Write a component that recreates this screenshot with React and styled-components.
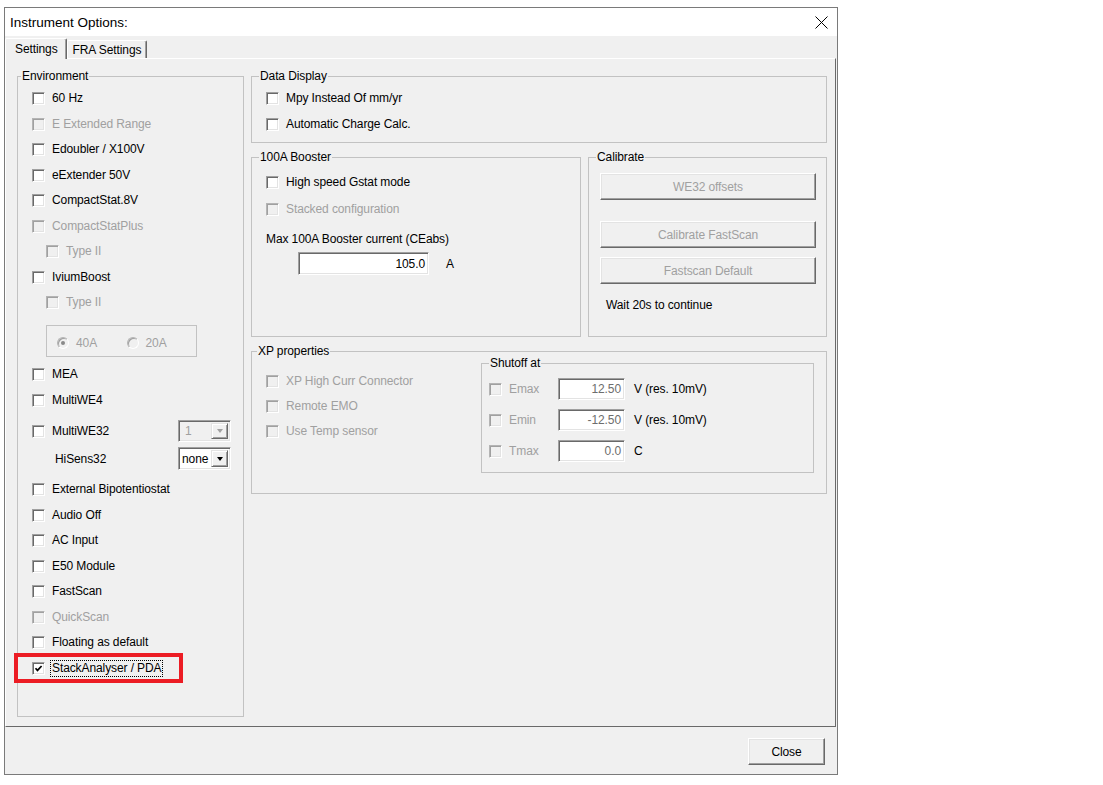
import styled, { createGlobalStyle } from "styled-components";

const FACE = "#f0f0f0";
const GRAY_TEXT = "#a0a0a0";

const GlobalStyle = createGlobalStyle`
  html, body {
    margin: 0;
    background: #ffffff;
  }
  body {
    font-family: "Liberation Sans", Arial, sans-serif;
    font-size: 12px;
    letter-spacing: -0.1px;
    color: #000;
  }
`;

const Page = styled.div`
  padding: 7px 0 0 4px;
`;

const Window = styled.div`
  width: 834px;
  height: 768px;
  box-sizing: border-box;
  border: 1px solid #7a7a7a;
  background: ${FACE};
  display: flex;
  flex-direction: column;
`;

const TitleBar = styled.div`
  flex: none;
  height: 28px;
  background: #ffffff;
  display: flex;
  align-items: center;
  justify-content: space-between;
  padding: 0 9px 0 5px;
`;

const TitleText = styled.span`
  font-size: 13.5px;
  letter-spacing: 0;
`;

const TabStrip = styled.div`
  flex: none;
  height: 22px;
  display: flex;
  align-items: flex-end;
  position: relative;
  z-index: 1;
`;

const Tab = styled.div`
  box-sizing: border-box;
  height: ${(p) => (p.$active ? 21 : 18)}px;
  margin-bottom: ${(p) => (p.$active ? -1 : 0)}px;
  padding: ${(p) => (p.$active ? "0 8px 0 9px" : "0 5px")};
  display: flex;
  align-items: center;
  background: ${FACE};
  border-top: 1px solid #ffffff;
  border-left: 1px solid #ffffff;
  border-right: 1px solid #696969;
  box-shadow: inset -1px 0 0 #a0a0a0;
  border-radius: 2px 2px 0 0;
`;

const Panel = styled.div`
  flex: none;
  height: 669px;
  box-sizing: border-box;
  margin-right: 1px;
  border: 1px solid;
  border-color: #ffffff #696969 #696969 #ffffff;
  display: flex;
  gap: 7px;
  padding: 10px 8px 9px 11px;
`;

const Group = styled.fieldset`
  margin: 0;
  padding: 0;
  min-width: 0;
  box-sizing: border-box;
  flex: none;
  width: ${(p) => p.$w}px;
  height: ${(p) => p.$h}px;
  border: 1px solid #c2c2c2;
`;

const Legend = styled.legend`
  margin-left: ${(p) => p.$inset ?? 7}px;
  padding: 0 1px;
  line-height: 14px;
`;

const ListBody = styled.div`
  padding: 3px 12px 0 14px;
  display: flex;
  flex-direction: column;
`;

const GroupBody = styled.div`
  padding: ${(p) => p.$pt ?? 0}px 10px 0 14px;
  display: flex;
  flex-direction: column;
`;

const RightCol = styled.div`
  display: flex;
  flex-direction: column;
  gap: 7px;
`;

const GroupRow = styled.div`
  display: flex;
  gap: 7px;
`;

const Row = styled.div`
  position: relative;
  flex: none;
  display: flex;
  align-items: center;
  gap: 7px;
  height: ${(p) => p.$h ?? 25.5}px;
  margin-top: ${(p) => p.$mt ?? 0}px;
  padding-left: ${(p) => p.$indent ?? 0}px;
  color: ${(p) => (p.$disabled ? GRAY_TEXT : "#000")};
  white-space: nowrap;
`;

const Box = styled.span`
  flex: none;
  width: 13px;
  height: 13px;
  box-sizing: border-box;
  border: 1px solid;
  border-color: ${(p) =>
    p.$disabled ? "#b4b4b4 #fff #fff #b4b4b4" : "#a0a0a0 #fff #fff #a0a0a0"};
  box-shadow: ${(p) =>
    p.$disabled
      ? "inset 1px 1px 0 #a0a0a0, inset -1px -1px 0 #e3e3e3"
      : "inset 1px 1px 0 #696969, inset -1px -1px 0 #e3e3e3"};
  background: ${(p) => (p.$disabled ? FACE : "#ffffff")};
  display: flex;
  align-items: center;
  justify-content: center;
`;

const Label = styled.span`
  line-height: 13px;
  outline: ${(p) => (p.$focus ? "1px dotted #000" : "none")};
  outline-offset: 1px;
`;

const Highlight = styled.span`
  position: absolute;
  left: -18px;
  top: -2px;
  width: 169px;
  height: 30px;
  box-sizing: border-box;
  border: 4px solid #ec1c24;
  pointer-events: none;
`;

const RadioFrame = styled.div`
  flex: none;
  margin: 9.5px 0 0 14px;
  width: 151px;
  height: 32px;
  box-sizing: border-box;
  border: 1px solid #c2c2c2;
  display: flex;
  align-items: center;
  padding: 4px 0 0 10px;
  color: ${GRAY_TEXT};
`;

const RadioItem = styled.div`
  width: 70px;
  display: flex;
  align-items: center;
  gap: 7px;
`;

const RadioDot = styled.span`
  width: 12px;
  height: 12px;
  box-sizing: border-box;
  border-radius: 50%;
  border: 1px solid;
  border-color: #b4b4b4 #fff #fff #b4b4b4;
  box-shadow: inset 1px 1px 0 #a0a0a0;
  background: ${FACE};
  display: flex;
  align-items: center;
  justify-content: center;

  &::after {
    content: "";
    width: 4px;
    height: 4px;
    border-radius: 50%;
    background: ${(p) => (p.$on ? "#8a8a8a" : "transparent")};
  }
`;

const Combo = styled.div`
  margin-left: auto;
  width: 53px;
  height: ${(p) => p.$h}px;
  box-sizing: border-box;
  border: 1px solid;
  border-color: #a0a0a0 #fff #fff #a0a0a0;
  box-shadow: inset 1px 1px 0 #696969, inset -1px -1px 0 #e3e3e3;
  background: ${(p) => (p.$disabled ? FACE : "#ffffff")};
  color: ${(p) => (p.$disabled ? GRAY_TEXT : "#000")};
  display: flex;
  padding: 2px;
`;

const ComboText = styled.span`
  flex: 1;
  display: flex;
  align-items: center;
  padding-left: ${(p) => p.$pad ?? 3}px;
`;

const ComboButton = styled.span`
  width: 17px;
  box-sizing: border-box;
  border: 1px solid;
  border-color: #e3e3e3 #696969 #696969 #e3e3e3;
  box-shadow: inset 1px 1px 0 #fff, inset -1px -1px 0 #a0a0a0;
  background: ${FACE};
  display: flex;
  align-items: center;
  justify-content: center;

  &::after {
    content: "";
    border-left: 3.5px solid transparent;
    border-right: 3.5px solid transparent;
    border-top: 4px solid ${(p) => (p.$disabled ? GRAY_TEXT : "#000")};
  }
`;

const PushButton = styled.div`
  flex: none;
  box-sizing: border-box;
  width: ${(p) => p.$w}px;
  height: ${(p) => p.$h ?? 27}px;
  margin-top: ${(p) => p.$mt ?? 0}px;
  margin-left: ${(p) => p.$ml ?? 0}px;
  border: 1px solid;
  border-color: #ffffff #696969 #696969 #ffffff;
  box-shadow: inset -1px -1px 0 #a0a0a0, inset 1px 1px 0 #e3e3e3;
  background: ${FACE};
  color: ${(p) => (p.$disabled ? GRAY_TEXT : "#000")};
  display: flex;
  align-items: center;
  justify-content: center;
`;

const TextLine = styled.div`
  line-height: 14px;
  margin-top: ${(p) => p.$mt ?? 0}px;
  padding-left: ${(p) => p.$pl ?? 0}px;
`;

const FieldRow = styled.div`
  display: flex;
  align-items: center;
  gap: ${(p) => p.$gap ?? 17}px;
  margin-top: ${(p) => p.$mt ?? 0}px;
  padding-left: ${(p) => p.$pl ?? 0}px;
`;

const Field = styled.div`
  flex: none;
  width: ${(p) => p.$w}px;
  height: ${(p) => p.$h ?? 22}px;
  box-sizing: border-box;
  border: 1px solid;
  border-color: #a0a0a0 #fff #fff #a0a0a0;
  box-shadow: inset 1px 1px 0 #696969, inset -1px -1px 0 #e3e3e3;
  background: #ffffff;
  color: ${(p) => (p.$dim ? "#6d6d6d" : "#000")};
  display: flex;
  align-items: center;
  justify-content: flex-end;
  padding-right: 3px;
`;

const Unit = styled.span`
  margin-left: 2px;
`;

const XpBody = styled.div`
  display: flex;
  padding: 0 12px 0 14px;
`;

const XpList = styled.div`
  padding-top: 11px;
  display: flex;
  flex-direction: column;
`;

const ShutoffGroup = styled(Group)`
  margin: -2px 0 0 auto;
`;

const ShutoffBody = styled.div`
  padding: 8px 0 0 7px;
  display: flex;
  flex-direction: column;
  gap: 9px;
`;

const ShutLabel = styled.span`
  width: 42px;
  color: ${GRAY_TEXT};
`;

const Footer = styled.div`
  flex: 1;
  display: flex;
  justify-content: flex-end;
  align-items: flex-start;
  padding: 11px 12px 0 0;
`;

const CheckMark = () => (
  <svg width="9" height="9" viewBox="0 0 9 9">
    <path d="M1.5 4.2 L3.5 6.4 L7.6 2" fill="none" stroke="#000" strokeWidth="1.7" />
  </svg>
);

const CloseIcon = () => (
  <svg width="13" height="13" viewBox="0 0 13 13">
    <path d="M0.5 0.5 L12.5 12.5 M12.5 0.5 L0.5 12.5" stroke="#000" strokeWidth="1" />
  </svg>
);

const Check = ({ label, disabled, checked, focus, highlight, indent, h, mt, children }) => (
  <Row $disabled={disabled} $indent={indent} $h={h} $mt={mt}>
    {highlight && <Highlight />}
    <Box $disabled={disabled}>{checked && <CheckMark />}</Box>
    <Label $focus={focus}>{label}</Label>
    {children}
  </Row>
);

const ShutRow = ({ name, value, unit }) => (
  <FieldRow $gap={7}>
    <Box $disabled />
    <ShutLabel>{name}</ShutLabel>
    <Field $w={67} $dim>
      {value}
    </Field>
    <Unit>{unit}</Unit>
  </FieldRow>
);

const App = () => {
  return (
    <Page>
      <GlobalStyle />
      <Window>
        <TitleBar>
          <TitleText>Instrument Options:</TitleText>
          <CloseIcon />
        </TitleBar>

        <TabStrip>
          <Tab $active>Settings</Tab>
          <Tab>FRA Settings</Tab>
        </TabStrip>

        <Panel>
          <Group $w={227} $h={648}>
            <Legend $inset={3}>Environment</Legend>
            <ListBody>
              <Check label="60 Hz" />
              <Check label="E Extended Range" disabled />
              <Check label="Edoubler / X100V" />
              <Check label="eExtender 50V" />
              <Check label="CompactStat.8V" />
              <Check label="CompactStatPlus" disabled />
              <Check label="Type II" disabled indent={14} />
              <Check label="IviumBoost" />
              <Check label="Type II" disabled indent={14} />

              <RadioFrame>
                <RadioItem>
                  <RadioDot $on />
                  40A
                </RadioItem>
                <RadioItem>
                  <RadioDot />
                  20A
                </RadioItem>
              </RadioFrame>

              <Check label="MEA" mt={5} />
              <Check label="MultiWE4" />
              <Check label="MultiWE32" h={22} mt={7}>
                <Combo $h={22} $disabled>
                  <ComboText $pad={4}>1</ComboText>
                  <ComboButton $disabled />
                </Combo>
              </Check>
              <Row $h={23} $mt={5} $indent={23}>
                <span>HiSens32</span>
                <Combo $h={23}>
                  <ComboText $pad={1}>none</ComboText>
                  <ComboButton />
                </Combo>
              </Row>
              <Check label="External Bipotentiostat" mt={6.75} />
              <Check label="Audio Off" />
              <Check label="AC Input" />
              <Check label="E50 Module" />
              <Check label="FastScan" />
              <Check label="QuickScan" disabled />
              <Check label="Floating as default" />
              <Check label="StackAnalyser / PDA" checked focus highlight />
            </ListBody>
          </Group>

          <RightCol>
            <Group $w={576} $h={74}>
              <Legend>Data Display</Legend>
              <GroupBody $pt={3}>
                <Check label="Mpy Instead Of mm/yr" h={25.5} />
                <Check label="Automatic Charge Calc." h={25.5} />
              </GroupBody>
            </Group>

            <GroupRow>
              <Group $w={330} $h={187}>
                <Legend>100A Booster</Legend>
                <GroupBody $pt={5}>
                  <Check label="High speed Gstat mode" h={27} />
                  <Check label="Stacked configuration" disabled h={27} />
                  <TextLine $mt={9}>Max 100A Booster current (CEabs)</TextLine>
                  <FieldRow $mt={6} $pl={32}>
                    <Field $w={131} $h={23}>
                      105.0
                    </Field>
                    <span>A</span>
                  </FieldRow>
                </GroupBody>
              </Group>

              <Group $w={239} $h={187}>
                <Legend>Calibrate</Legend>
                <GroupBody $pt={9}>
                  <PushButton $w={216} $ml={-3} $disabled>
                    WE32 offsets
                  </PushButton>
                  <PushButton $w={216} $ml={-3} $mt={21} $disabled>
                    Calibrate FastScan
                  </PushButton>
                  <PushButton $w={216} $ml={-3} $mt={9} $disabled>
                    Fastscan Default
                  </PushButton>
                  <TextLine $mt={14} $pl={3}>
                    Wait 20s to continue
                  </TextLine>
                </GroupBody>
              </Group>
            </GroupRow>

            <Group $w={576} $h={150}>
              <Legend $inset={5}>XP properties</Legend>
              <XpBody>
                <XpList>
                  <Check label="XP High Curr Connector" disabled h={25} />
                  <Check label="Remote EMO" disabled h={25} />
                  <Check label="Use Temp sensor" disabled h={25} />
                </XpList>

                <ShutoffGroup $w={333} $h={117}>
                  <Legend>Shutoff at</Legend>
                  <ShutoffBody>
                    <ShutRow name="Emax" value="12.50" unit="V (res. 10mV)" />
                    <ShutRow name="Emin" value="-12.50" unit="V (res. 10mV)" />
                    <ShutRow name="Tmax" value="0.0" unit="C" />
                  </ShutoffBody>
                </ShutoffGroup>
              </XpBody>
            </Group>
          </RightCol>
        </Panel>

        <Footer>
          <PushButton $w={77}>Close</PushButton>
        </Footer>
      </Window>
    </Page>
  );
};

export default App;
